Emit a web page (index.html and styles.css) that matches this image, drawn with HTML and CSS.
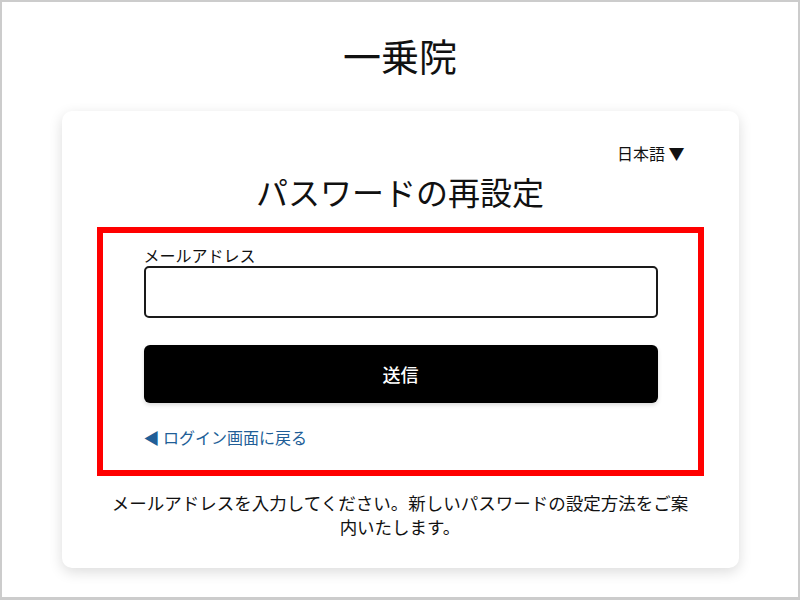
FILE: index.html
```html
<!DOCTYPE html>
<html lang="ja">
<head>
    <meta charset="UTF-8">
    <meta name="viewport" content="width=device-width, initial-scale=1.0">
    <title>パスワードの再設定</title>
    <link rel="stylesheet" href="styles.css">
</head>
<body>
    <div class="frame">
        <h1 class="site-title">一乗院</h1>
        <div class="card">
            <div class="lang">日本語 ▼</div>
            <h2>パスワードの再設定</h2>
            <div class="highlight">
                <form class="reset-form" onsubmit="return false;">
                    <label for="email">メールアドレス</label>
                    <input type="email" id="email" name="email">
                    <button type="submit" class="btn">送信</button>
                </form>
                <a href="#" class="back-link">◀ ログイン画面に戻る</a>
            </div>
            <p class="note">メールアドレスを入力してください。新しいパスワードの設定方法をご案内いたします。</p>
        </div>
    </div>
</body>
</html>
```

FILE: styles.css
```css
body {
    margin: 0;
    padding: 0;
    font-family: "Noto Sans CJK JP", "Noto Sans", sans-serif;
    color: #111;
}
.frame {
    width: 800px;
    height: 600px;
    box-sizing: border-box;
    border: 2px solid #ccc;
    border-bottom-width: 3px;
    background: #fff;
    overflow: hidden;
}
.site-title {
    margin: 30px 0 0;
    font-size: 38px;
    font-weight: 400;
    line-height: 46px;
    text-align: center;
}
.card {
    width: 677px;
    box-sizing: border-box;
    margin: 33px auto 0;
    padding: 30px 0 29px;
    background: #fff;
    border-radius: 10px;
    box-shadow: 0 4px 14px rgba(0, 0, 0, 0.14);
}
.lang {
    text-align: right;
    padding-right: 54px;
    font-size: 16px;
    line-height: 24px;
}
h2 {
    margin: 4px 0 14px;
    font-size: 32px;
    font-weight: 400;
    line-height: 44px;
    text-align: center;
}
.highlight {
    margin: 0 35px;
    border: 6px solid #f00;
    padding: 11px 40px 21px 41px;
}
.reset-form {
    display: flex;
    flex-direction: column;
}
.reset-form label {
    font-size: 16px;
    line-height: 22px;
}
.reset-form input {
    height: 52px;
    box-sizing: border-box;
    margin-top: 0;
    border: 2px solid #1a1a1a;
    border-radius: 5px;
    font-size: 16px;
    padding: 0 10px;
}
.btn {
    height: 58px;
    margin-top: 27px;
    background: #000;
    color: #fff;
    border: none;
    border-radius: 6px;
    box-shadow: 0 2px 4px rgba(0, 0, 0, 0.15);
    font-family: inherit;
    font-size: 18px;
    font-weight: 500;
    cursor: pointer;
}
.back-link {
    display: inline-block;
    margin-top: 23px;
    color: #215e97;
    font-size: 16px;
    line-height: 22px;
    text-decoration: none;
}
.note {
    margin: 15px 0 0;
    padding: 0 48px;
    font-size: 17.5px;
    line-height: 24px;
    text-align: center;
}
```
